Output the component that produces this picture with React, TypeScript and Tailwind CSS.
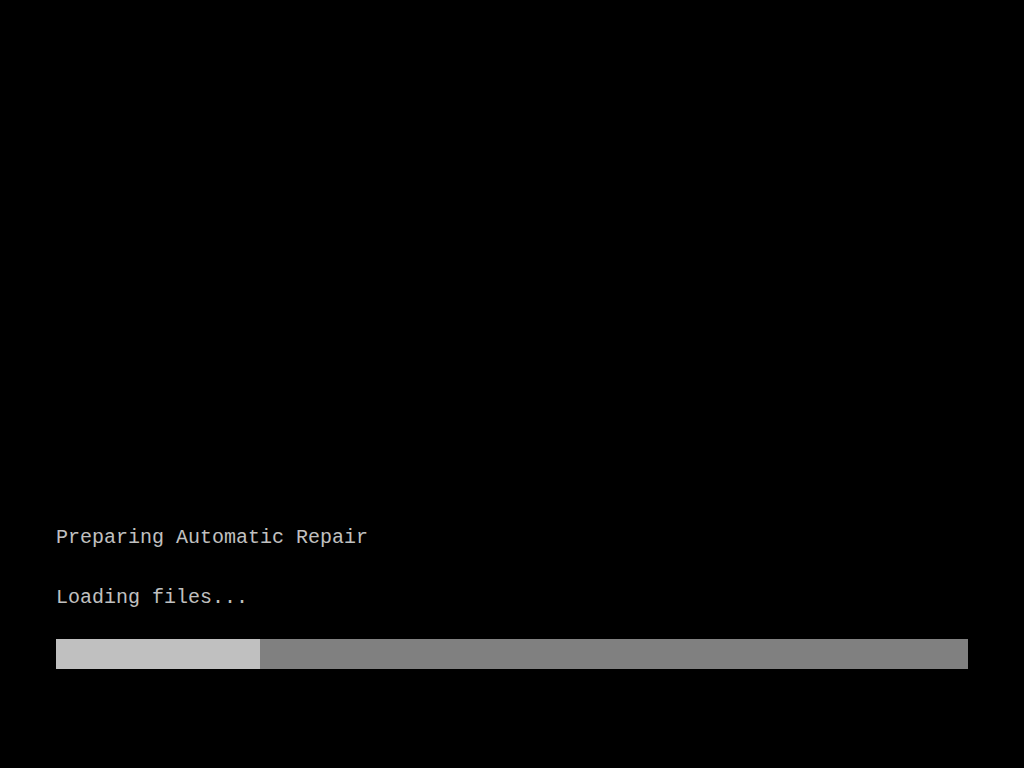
export default function App() {
  return (
    <div className="w-[1024px] h-[768px] bg-black flex flex-col pl-[56px] pt-[526px] text-[#c0c0c0]" style={{ fontFamily: '"Liberation Mono", "DejaVu Sans Mono", monospace' }}>
      <div className="text-[20px] leading-[24px]">Preparing Automatic Repair</div>
      <div className="text-[20px] leading-[24px] mt-[36px]">Loading files...</div>
      <div className="mt-[29px] w-[912px] h-[30px] bg-[#808080] flex">
        <div className="w-[204px] h-full bg-[#c0c0c0]" />
      </div>
    </div>
  );
}
